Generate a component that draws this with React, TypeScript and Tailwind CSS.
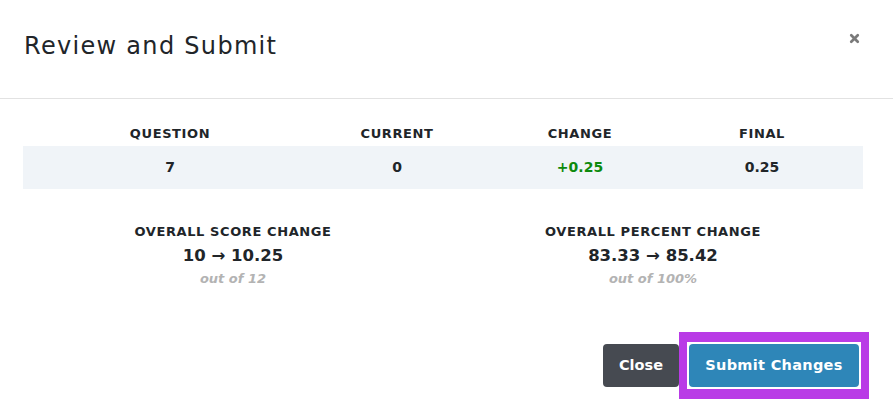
import { X } from "lucide-react";

const font = { fontFamily: '"DejaVu Sans", "Open Sans", sans-serif' };

export default function App() {
  return (
    <div className="w-[893px] h-[409px] bg-white text-[#212529] overflow-hidden" style={font}>
      {/* Header */}
      <div className="flex items-center justify-between h-[99px] pl-[24px] pr-[32px] border-b border-[#e2e2e2]">
        <h1 className="text-[24px] font-normal tracking-[1.3px] pb-[6px]">Review and Submit</h1>
        <X size={13} strokeWidth={5} className="text-[#7a7a7a] mb-[22px]" />
      </div>

      {/* Question table */}
      <div className="px-[23px] pt-[23px] pr-[30px]">
        <div className="grid grid-cols-[294px_160px_206px_158px_22px] text-[13px] font-bold tracking-[0.6px] text-center h-[24px] items-center">
          <div>QUESTION</div>
          <div>CURRENT</div>
          <div>CHANGE</div>
          <div>FINAL</div>
          <div />
        </div>
        <div className="grid grid-cols-[294px_160px_206px_158px_22px] text-[14px] font-bold text-center h-[43px] items-center bg-[#f0f4f8]">
          <div>7</div>
          <div>0</div>
          <div className="text-[#0d8a0d]">+0.25</div>
          <div className="font-semibold">0.25</div>
          <div />
        </div>

        {/* Summary */}
        <div className="grid grid-cols-2 text-center mt-[34px]">
          <div className="flex flex-col items-center">
            <div className="text-[13px] font-bold tracking-[0.6px] leading-[18px]">OVERALL SCORE CHANGE</div>
            <div className="text-[16.5px] font-bold leading-[30px]">10 → 10.25</div>
            <div className="text-[13px] italic font-semibold text-[#b3b3b3] leading-[16px]">out of 12</div>
          </div>
          <div className="flex flex-col items-center">
            <div className="text-[13px] font-bold tracking-[0.6px] leading-[18px]">OVERALL PERCENT CHANGE</div>
            <div className="text-[16.5px] font-bold leading-[30px]">83.33 → 85.42</div>
            <div className="text-[13px] italic font-semibold text-[#b3b3b3] leading-[16px]">out of 100%</div>
          </div>
        </div>
      </div>

      {/* Footer */}
      <div className="flex justify-end items-center mt-[45px] pr-[24px]">
        <button className="h-[43px] px-[16px] rounded-[4px] bg-[#464a51] text-white text-[14.5px] font-bold">
          Close
        </button>
        <div className="border-x-[8px] border-y-[10px] border-[#b93be6] p-[2px] bg-white">
          <button className="h-[43px] w-[170px] rounded-[4px] bg-[#2e86b8] text-white text-[14.5px] font-bold tracking-[0.3px]">
            Submit Changes
          </button>
        </div>
      </div>
    </div>
  );
}
